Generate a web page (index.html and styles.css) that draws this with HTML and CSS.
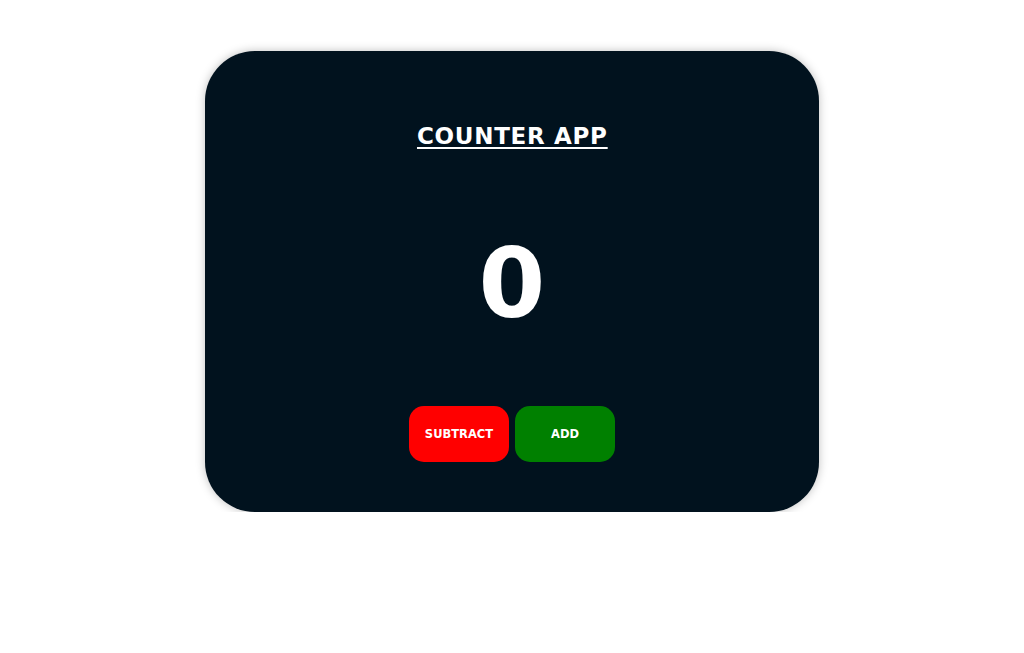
FILE: index.html
```html
<!DOCTYPE html>
<html>
<head>
<meta charset="utf-8">
<link rel="stylesheet" href="styles.css">
</head>
<body>
<main class="page">
  <section class="card">
    <h1 class="title">COUNTER APP</h1>
    <div class="count">0</div>
    <div class="actions">
      <button class="btn btn-sub">SUBTRACT</button>
      <button class="btn btn-add">ADD</button>
    </div>
  </section>
</main>
</body>
</html>
```
FILE: styles.css
```css
html, body {
  margin: 0;
  padding: 0;
  background: #ffffff;
}
body {
  font-family: "DejaVu Sans", Verdana, sans-serif;
}
.page {
  display: flex;
  justify-content: center;
  padding-top: 51px;
}
.card {
  box-sizing: border-box;
  width: 614px;
  height: 461px;
  background: #01121e;
  border-radius: 50px;
  box-shadow: 0 0 10px rgba(0, 0, 0, 0.25);
  display: flex;
  flex-direction: column;
  align-items: center;
  padding-top: 72px;
  color: #ffffff;
}
.title {
  margin: 0;
  font-size: 23px;
  line-height: 26px;
  font-weight: bold;
  letter-spacing: 0.7px;
  text-indent: 0.7px;
  text-decoration: underline;
  text-decoration-thickness: 2px;
  text-underline-offset: 3px;
}
.count {
  margin-top: 79px;
  font-size: 96px;
  line-height: 112px;
  font-weight: bold;
}
.actions {
  margin-top: 66px;
  display: flex;
  gap: 6px;
}
.btn {
  width: 100px;
  height: 56px;
  border: none;
  border-radius: 15px;
  color: #ffffff;
  font-family: "DejaVu Sans", Verdana, sans-serif;
  font-weight: bold;
  font-size: 11.5px;
  padding: 0;
}
.btn-sub {
  background: #ff0000;
}
.btn-add {
  background: #008000;
}
```
